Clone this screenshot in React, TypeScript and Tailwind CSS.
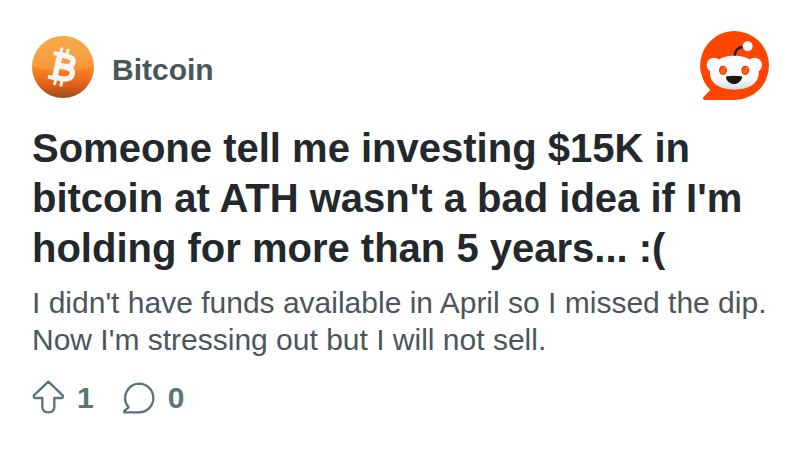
import React from "react";

type StatProps = {
  label: string;
  count: number;
  children: React.ReactNode;
};

const BitcoinLogo: React.FC = () => (
  <svg viewBox="36 33 186 186" className="size-[62px] shrink-0" aria-hidden="true">
    <defs>
      <linearGradient id="coin" x1="0" y1="0" x2="0" y2="1">
        <stop offset="0" stopColor="#f5a030" />
        <stop offset="0.5" stopColor="#f58a22" />
        <stop offset="0.75" stopColor="#e9661a" />
        <stop offset="1" stopColor="#a04a1c" />
      </linearGradient>
      <linearGradient id="shine" x1="0" y1="0" x2="0" y2="1">
        <stop offset="0" stopColor="#fff" stopOpacity="0.1" />
        <stop offset="1" stopColor="#ffb45a" stopOpacity="0.3" />
      </linearGradient>
    </defs>
    <circle cx="129" cy="126" r="93" fill="url(#coin)" />
    <path d="M37 122a92 89 0 0 1 184 0c-28 14-62 17-92 16-34 0-66-4-92-16z" fill="url(#shine)" />
    <g fill="none" stroke="#f4f4f4">
      <path d="M126 68l-5 20M145 72l-5 20M108 160l-5 20M127 164l-5 20" strokeWidth="9" />
      <path d="M101 84L121 89L105 160L84 155" strokeWidth="12" />
      <path d="M118 89L133 92C151 96 162 100 159 112C156 126 143 126 130 123L112 119" strokeWidth="16" />
      <path d="M113 121L132 125C149 129 160 134 157 147C153 162 137 164 120 160L101 156" strokeWidth="16" />
      <path d="M119 92L104 158" strokeWidth="17" />
    </g>
  </svg>
);

const RedditLogo: React.FC = () => (
  <svg
    viewBox="24 27 210 207"
    className="h-[69px] w-[70px] shrink-0 overflow-visible"
    role="img"
    aria-label="Reddit"
  >
    <defs>
      <linearGradient id="face" x1="0" y1="0" x2="0" y2="1">
        <stop offset="0" stopColor="#fff" />
        <stop offset="0.7" stopColor="#f7fafc" />
        <stop offset="1" stopColor="#cfdce6" />
      </linearGradient>
      <radialGradient id="eye" cx="0.5" cy="0.6" r="0.6">
        <stop offset="0" stopColor="#ff7a1a" />
        <stop offset="1" stopColor="#f02c00" />
      </radialGradient>
    </defs>
    <path
      d="M133.500 27A103.500 103.500 0 1 1 133.500 234H45c-6 0-8-6-4-10l20-20A103.500 103.500 0 0 1 133.500 27z"
      fill="#ff4500"
    />
    <circle cx="72" cy="129" r="22" fill="#fafcfd" />
    <circle cx="194" cy="129" r="22" fill="#fafcfd" />
    <path d="M134 104c0-17 9-29 28-29" fill="none" stroke="#241c19" strokeWidth="8" strokeLinecap="round" />
    <circle cx="173" cy="73" r="15" fill="#f7fafc" />
    <path
      d="M133 101c43 0 73 23 73 53 0 31-31 49-73 49s-73-18-73-49c0-30 30-53 73-53z"
      fill="url(#face)"
    />
    <ellipse cx="99" cy="145" rx="12" ry="14" fill="url(#eye)" />
    <ellipse cx="166" cy="145" rx="12" ry="14" fill="url(#eye)" />
    <circle cx="103" cy="138" r="2" fill="#ffd0bb" />
    <circle cx="170" cy="138" r="2" fill="#ffd0bb" />
    <path d="M112 163c13-2 28-2 41 0 3 0 4 2 3 5-4 11-12 18-24 18s-20-7-24-18c-1-3 1-5 4-5z" fill="#1c1616" />
  </svg>
);

const UpvoteIcon: React.FC = () => (
  <svg viewBox="36 31 96 102" className="h-[34px] w-8 shrink-0" aria-hidden="true">
    <path
      d="M85 36L128 77Q131 84 124 85H103V112Q102 128 85 128Q68 128 67 112V85H46Q39 84 42 77Z"
      fill="none"
      stroke="#5c7479"
      strokeWidth="7"
      strokeLinejoin="round"
    />
  </svg>
);

const CommentIcon: React.FC = () => (
  <svg viewBox="306 34 99 99" className="size-[33px] shrink-0" aria-hidden="true">
    <path
      d="M357 42A43 43 0 1 1 357 128H313Q312 124 315 122L326 113A43 43 0 0 1 357 42Z"
      fill="none"
      stroke="#5c7479"
      strokeWidth="7"
      strokeLinejoin="round"
    />
  </svg>
);

const Stat: React.FC<StatProps> = ({ label, count, children }) => (
  <button
    type="button"
    aria-label={`${label}: ${count}`}
    className="flex items-center gap-[13px] text-[30px]/[34px] font-bold text-[#5c7479]"
  >
    {children}
    <span className="pt-0.5">{count}</span>
  </button>
);

const App: React.FC = () => {
  return (
    <main className="min-h-screen bg-white px-8 pt-[31px] pb-8 font-['Liberation_Sans',Arial,sans-serif]">
      <header className="flex items-center justify-between">
        <div className="flex items-center gap-[18px] pt-0.5">
          <BitcoinLogo />
          <span className="pt-1.5 text-[30px]/[36px] font-bold text-[#4a565b]">Bitcoin</span>
        </div>
        <RedditLogo />
      </header>

      <article className="mt-[23px]">
        <h1 className="text-[40px]/[50px] font-bold text-[#22282b]">
          Someone tell me investing $15K in bitcoin at ATH wasn't a bad idea if I'm holding for more than 5 years... :(
        </h1>
        <p className="mt-[11px] text-[30px]/[37px] text-[#4a565b]">
          I didn't have funds available in April so I missed the dip. Now I'm stressing out but I will not sell.
        </p>
      </article>

      <footer className="mt-[21px] flex items-center gap-7">
        <Stat label="Upvotes" count={1}>
          <UpvoteIcon />
        </Stat>
        <Stat label="Comments" count={0}>
          <CommentIcon />
        </Stat>
      </footer>
    </main>
  );
};

export default App;
